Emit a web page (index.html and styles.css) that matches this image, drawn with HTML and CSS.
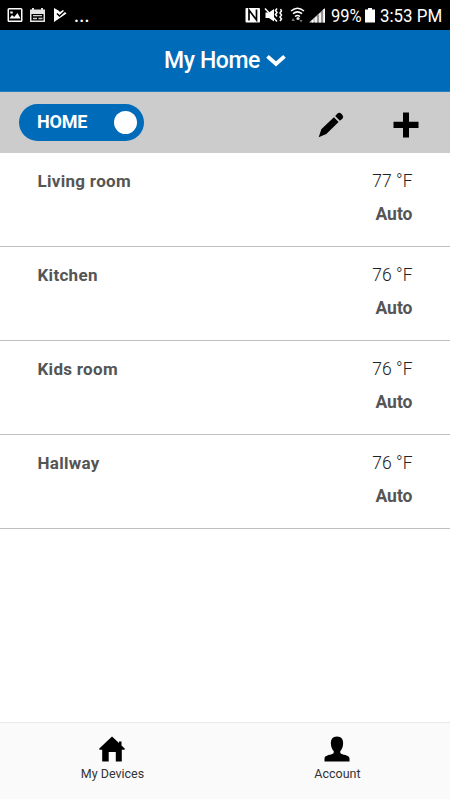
FILE: index.html
```html
<!DOCTYPE html>
<html lang="en">
<head>
<meta charset="utf-8">
<title>My Home</title>
<link rel="stylesheet" href="styles.css">
</head>
<body>
<div class="app">
  <div class="status">
    <svg class="notifications" width="72" height="30" viewBox="0 0 72 30">
      <path fill="#fff" fill-rule="evenodd" d="M9 8H21Q22.500 8 22.500 9.500V20.500Q22.500 22 21 22H9Q7.500 22 7.500 20.500V9.500Q7.500 8 9 8ZM9 9.500V20.500H21V9.500Z"/>
      <path fill="#fff" d="M9.500 18.500L12 15L14.200 17L17.500 13L20.500 18.500ZM10.300 11.500h2.400v2h-2.400z"/>
      <path fill="#e4e4e4" fill-rule="evenodd" d="M30 9.500H32V8H34V9.500H41V8H43V9.500H45V22H30ZM31.500 14V20.500H43.500V14Z"/>
      <path stroke="#d0d0d0" stroke-width="1.300" d="M33 15.700h9M33 18.500h4M38.500 18.500h4"/>
      <path fill="#fff" d="M54 8L58.500 10.500L60 12L63 10L66.500 13.500L54 22Z"/>
      <path fill="none" stroke="#000" stroke-width="1.500" d="M57 13.500L59.500 16L65.500 10.500"/>
    </svg>
    <span class="dots">...</span>
    <svg class="signals" width="86" height="30" viewBox="0 0 86 30">
      <rect x="5.500" y="8" width="14.500" height="14.500" rx="1" fill="#fff"/>
      <path fill="none" stroke="#000" stroke-width="1.700" d="M9 20.500V10L16.500 20V9.500"/>
      <path fill="#fff" d="M25.500 12.500H29L34 9V21.500L29 18H25.500Z"/>
      <path fill="none" stroke="#fff" stroke-width="1.500" d="M25 8.500L37 21.500M37 8.500l-1.500 2l1.500 2l-1.500 2l1.500 2M40.500 9l1 2l-1.500 2l1.500 2l-1.500 2l1.500 2l-1.500 2"/>
      <path fill="none" stroke="#fff" stroke-width="1.500" d="M51 11Q57.500 5.500 64 11M53 13.700Q57.500 10 62 13.700M55 16.500Q57.500 14.500 60 16.500"/>
      <circle cx="58" cy="18.500" r="1.600" fill="#ddd"/>
      <path fill="#777" d="M53 18l2 3h-3.500zM59.500 20h3l-1.500 2.500z"/>
      <path fill="#c8c8c8" d="M69 22.500L85 8V22.500Z"/>
      <path fill="none" stroke="#fff" stroke-width="1.500" d="M72.500 20V22.500M76 17V22.500M80 13.500V22.500M84.200 9V22.500"/>
      <path stroke="#444" stroke-width=".8" d="M78 14.500V22.500M82 11V22.500"/>
    </svg>
    <span class="percent">99%</span>
    <svg class="battery" width="10" height="30" viewBox="0 0 10 30"><path fill="#fff" d="M3 8H7V9.500H10V22.500H0V9.500H3Z"/></svg>
    <span class="time">3:53 PM</span>
  </div>
  <header class="header">
    <h1>My Home</h1>
    <svg width="20" height="14" viewBox="0 0 20 14"><path d="M1.500 2.300L10 10L18.500 2.300" fill="none" stroke="#fff" stroke-width="3.800"/></svg>
  </header>
  <div class="toolbar">
    <div class="toggle"><span>HOME</span><i class="knob"></i></div>
    <svg class="pencil" width="26" height="26" viewBox="0 0 26 26"><path d="M.7 25.200L3.300 17.300L15.900 5.200L20.600 9.900L8.300 22.100ZM17.200 4L19.500 1.500Q21.300 .1 23.300 1.700L24.600 3.200Q25.900 5 24.400 6.700L21.900 8.700Z"/></svg>
    <svg class="plus" width="26" height="26" viewBox="0 0 26 26"><path d="M10 .5h6v9.300h9.500v6.200H16v9.500h-6V16H.5V9.800H10z"/></svg>
  </div>
  <main class="rooms">
    <section class="room"><h2>Living room</h2><div class="reading"><span>77 °F</span><b>Auto</b></div></section>
    <section class="room"><h2>Kitchen</h2><div class="reading"><span>76 °F</span><b>Auto</b></div></section>
    <section class="room"><h2>Kids room</h2><div class="reading"><span>76 °F</span><b>Auto</b></div></section>
    <section class="room"><h2>Hallway</h2><div class="reading"><span>76 °F</span><b>Auto</b></div></section>
  </main>
  <nav class="tabs">
    <div class="tab">
      <svg width="26" height="26" viewBox="0 0 26 26"><path d="M13 .5L20 7V5.500H22.500V9.500L25.700 12.500V13.800H22.800V25.500H16.800V16H9.700V25.500H3.200V13.800H.3V12.500Z"/></svg>
      <span>My Devices</span>
    </div>
    <div class="tab">
      <svg width="26" height="26" viewBox="0 0 26 26"><path d="M13 .5C17.500 .5 19.500 3.500 19.100 8C19 11 17.800 13.500 16.300 15V17C18 19 25.500 18.800 25.500 22.500V25.500H.5V22.500C.5 18.800 8 19 9.700 17V15C8.200 13.500 7 11 6.900 8C6.500 3.500 8.500 .5 13 .5Z"/></svg>
      <span>Account</span>
    </div>
  </nav>
</div>
</body>
</html>
```
FILE: styles.css
```css
* { box-sizing: border-box; }
body { margin: 0; background: #fff; font-family: Roboto, "Liberation Sans", sans-serif; }
svg { display: block; flex: none; }
.app { width: 450px; height: 800px; display: flex; flex-direction: column; overflow: hidden; }
.status { height: 30px; flex: none; display: flex; background: #000; color: #fff; line-height: 32px; white-space: nowrap; }
.dots { width: 168px; padding-left: 2px; font-size: 18px; font-weight: 500; letter-spacing: .3px; }
.percent { width: 39px; flex: none; padding-left: 5px; font-size: 19px; transform: scaleX(.87); transform-origin: 5px 0; }
.time { margin-left: 5px; font-size: 19px; transform: scaleX(.89); transform-origin: 0 0; }
.header { height: 62px; flex: none; display: flex; padding: 16px 0 0 164px; background: #006bb8; border-bottom: 1px solid #2b7dbb; color: #fff; }
.header h1 { margin: 0; width: 102px; font-size: 23px; line-height: 29px; font-weight: 500; letter-spacing: -.4px; white-space: nowrap; }
.header svg { margin-top: 8px; }
.toolbar { height: 61px; flex: none; display: flex; align-items: flex-start; padding: 12px 31px 0 19px; background: #ccc; }
.toggle { width: 125px; height: 37px; display: flex; align-items: center; justify-content: space-between; padding: 0 7px 0 18px; border-radius: 19px; background: #006bb8; color: #fff; font-size: 18px; font-weight: 700; letter-spacing: -.2px; line-height: 35px; }
.toggle span { margin-top: -3px; }
.knob { width: 23px; height: 23px; border-radius: 50%; background: #fff; }
.pencil { margin: 8px 49px 0 auto; }
.plus { margin-top: 8px; }
.rooms { flex: 1; }
.room { height: 93.9px; display: flex; justify-content: space-between; padding: 17px 37.5px 0 37.5px; border-bottom: 1px solid #bebebe; color: #555; font-size: 17px; line-height: 22px; }
.room h2 { margin: 0; font-size: 17px; font-weight: 700; letter-spacing: .3px; }
.reading { display: flex; flex-direction: column; align-items: flex-end; gap: 11px; font-size: 17.500px; }
.reading span { font-weight: 300; color: #222; }
.tabs { height: 77px; flex: none; display: flex; margin-bottom: 1px; background: #fafafa; border-top: 1px solid #e9e9e9; }
.tab { flex: 1; display: flex; flex-direction: column; align-items: center; padding-top: 13px; color: #333; font-size: 12.500px; line-height: 16px; }
.tab svg { margin-right: 1px; }
.tab span { margin-top: 4px; }
```
